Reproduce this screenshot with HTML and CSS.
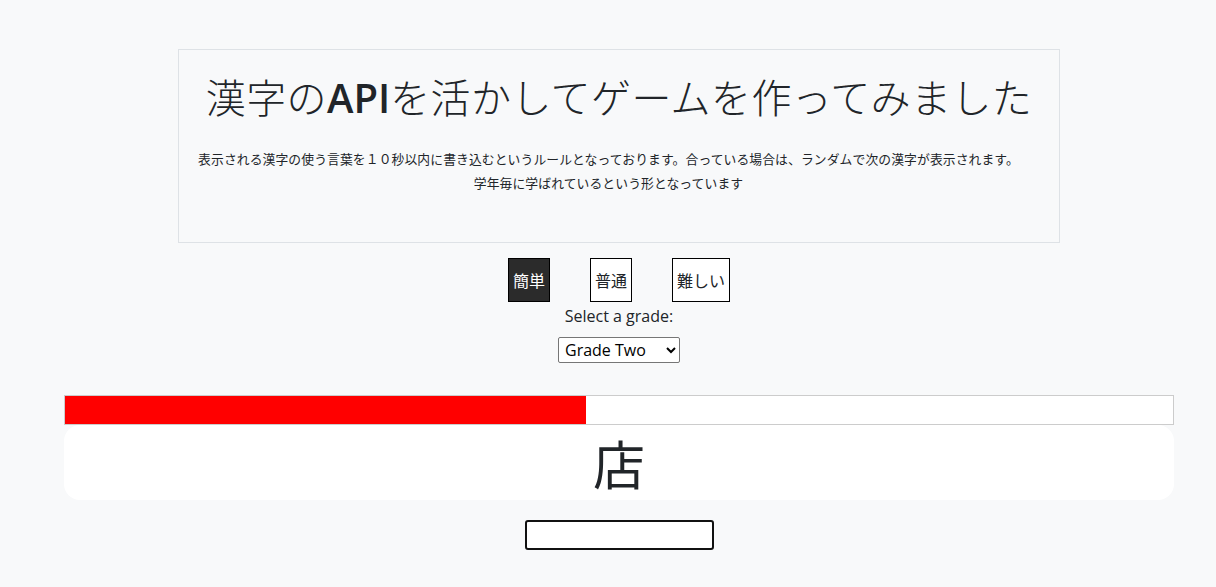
FILE: index.html
```html
<!DOCTYPE html>
<html lang="ja">
<head>
<meta charset="utf-8">
<title>漢字ゲーム</title>
<link rel="stylesheet" href="styles.css">
</head>
<body>
<div class="page">
  <section class="intro">
    <h1 class="title">漢字の<span class="latin">API</span>を活かしてゲームを作ってみました</h1>
    <p class="desc">表示される漢字の使う言葉を１０秒以内に書き込むというルールとなっております。合っている場合は、ランダムで次の漢字が表示されます。<br>学年毎に学ばれているという形となっています</p>
  </section>
  <div class="levels">
    <button class="level active">簡単</button>
    <button class="level">普通</button>
    <button class="level">難しい</button>
  </div>
  <label class="grade-label" for="grade">Select a grade:</label>
  <div class="grade-row">
    <select id="grade" class="grade-select">
      <option>Grade One</option>
      <option selected>Grade Two</option>
      <option>Grade Three</option>
    </select>
  </div>
  <div class="progress"><div class="progress-fill" style="width:47%"></div></div>
  <div class="card"><span class="kanji">店</span></div>
  <div class="answer-row"><input class="answer" type="text"></div>
</div>
</body>
</html>
```
FILE: styles.css
```css
html, body {
  margin: 0;
  padding: 0;
}
body {
  background: #f8f9fa;
  color: #212529;
  font-family: "Open Sans", "Noto Sans CJK JP", sans-serif;
}
.page {
  width: 1110px;
  margin-left: 64px;
  padding-top: 49px;
  text-align: center;
}
.intro {
  margin: 0 114px;
  border: 1px solid #dee2e6;
  padding: 22px 0 47px;
}
.title {
  margin: 0;
  font-family: "Noto Sans CJK JP", sans-serif;
  font-weight: 300;
  font-size: 40px;
  line-height: 48px;
  letter-spacing: 0.4px;
}
.latin {
  font-family: "Open Sans", sans-serif;
  font-weight: 600;
  letter-spacing: 0;
}
.desc {
  margin: 25px 0 0;
  padding-right: 21px;
  font-family: "Noto Sans CJK JP", sans-serif;
  font-size: 12.8px;
  line-height: 24px;
  letter-spacing: 0.1px;
}
.levels {
  display: flex;
  justify-content: center;
  gap: 40px;
  margin-top: 15px;
}
.level {
  font-family: "Noto Sans CJK JP", sans-serif;
  font-size: 16px;
  line-height: 24px;
  padding: 9px 4px;
  border: 1px solid #000;
  background: #fff;
  color: #212529;
  border-radius: 0;
  margin: 0;
}
.level.active {
  background: #2b2b2b;
  color: #fff;
}
.grade-label {
  display: block;
  margin-top: 2px;
  font-size: 16px;
  line-height: 24px;
}
.grade-row {
  margin-top: 9px;
  height: 26px;
}
.grade-select {
  width: 122px;
  height: 26px;
  font-family: "Open Sans", sans-serif;
  font-size: 16px;
  border: 1px solid #767676;
  border-radius: 2px;
  background: #fff;
  color: #000;
  padding: 0 2px;
}
.progress {
  margin-top: 32px;
  height: 28px;
  border: 1px solid #ccc;
  background: #fff;
  text-align: left;
}
.progress-fill {
  height: 100%;
  background: #ff0000;
}
.card {
  height: 75px;
  background: #fff;
  border-radius: 16px;
  display: flex;
  align-items: center;
  justify-content: center;
}
.kanji {
  font-family: "Noto Sans CJK JP", sans-serif;
  font-size: 52px;
  line-height: 75px;
}
.answer-row {
  margin-top: 20px;
}
.answer {
  width: 189px;
  height: 30px;
  box-sizing: border-box;
  border: 2px solid #111;
  border-radius: 3px;
  background: #fff;
  padding: 0;
}
```
